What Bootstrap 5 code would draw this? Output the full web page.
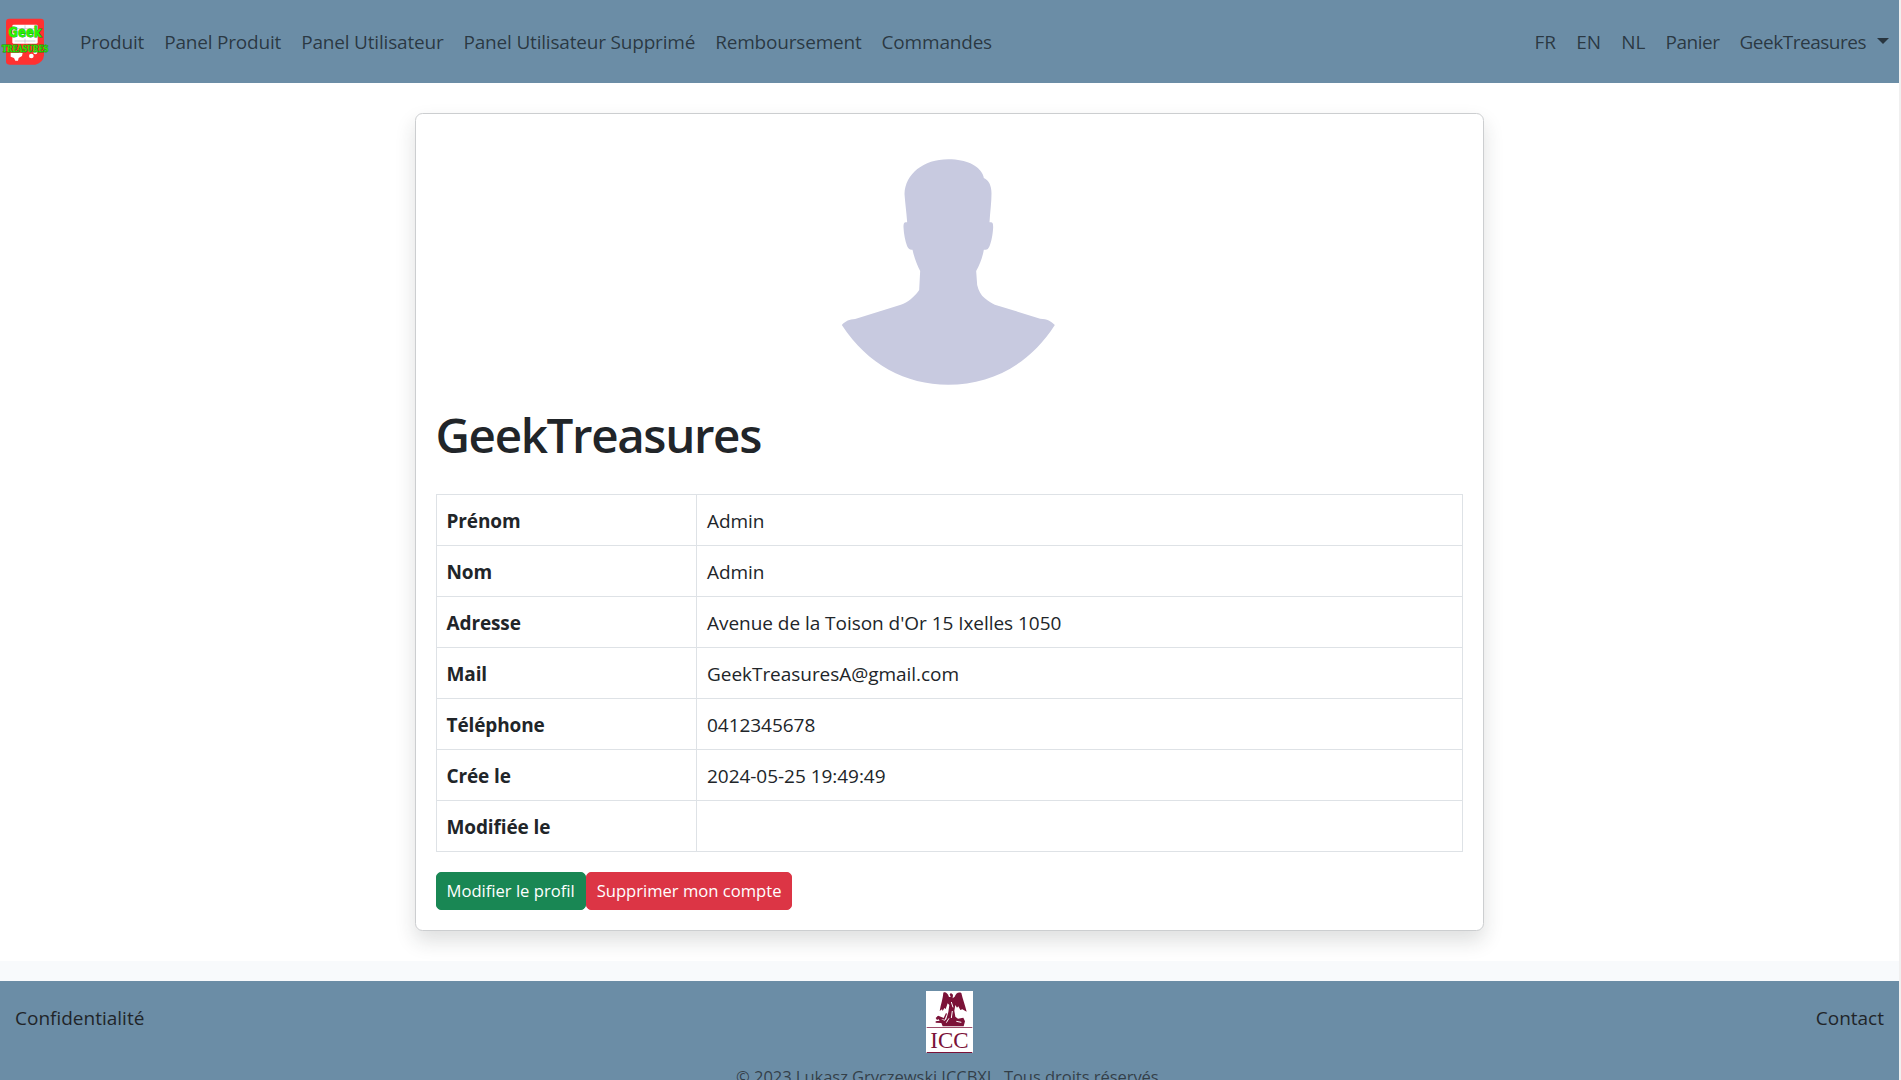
<!DOCTYPE html>
<html lang="fr">
<head>
<meta charset="utf-8">
<meta name="viewport" content="width=device-width, initial-scale=1">
<title>GeekTreasures</title>
<link href="https://cdn.jsdelivr.net/npm/bootstrap@5.3.0/dist/css/bootstrap.min.css" rel="stylesheet">
<style>
html { font-size: 20px; }
body { font-family: "Open Sans", "Noto Sans", sans-serif; font-size: 19px; line-height: 30px; background: #f0f0f0; overflow: hidden; }
.page { width: calc(100% - 2px); height: 100vh; overflow: hidden; background: #f8fafc; }
.bar { background: #6b8da6; }
.topbar { height: 83px; }
.topbar .nav-link { font-size: 19px; letter-spacing: -.19px; color: rgba(0,0,0,.62); padding-left: .5rem; padding-right: .5rem; }
.topbar .navbar-brand { line-height: 0; }
.topbar .lang { letter-spacing: .05px; }
.topbar .cart { letter-spacing: -.48px; }
.topbar .user { letter-spacing: -.48px; padding-right: 10px; }
.user::after { margin-left: 11px; vertical-align: 5px; border-top-width: 6px; border-left-width: 6px; border-right-width: 6px; }
.content-area { height: 878px; padding-top: 30px; }
.profile-wrap { width: 1650px; max-width: 100%; }
.profile-col { padding: 0 15px; }
.profile-card { border-radius: 7.5px; border-color: #ccced0; }
.profile-card .card-body { padding: 21px 20px 20px; }
.avatar { margin-bottom: 20px; }
.profile-name { font-size: 47.5px; line-height: 60px; font-weight: 600; letter-spacing: -1.35px; margin-bottom: 29px; }
.info { margin-bottom: 20px; }
.info th { width: 260.5px; }
.info th, .info td { height: 51px; padding: 11px 10px 9px; }
.info th { letter-spacing: -.12px; }
.info td { letter-spacing: -.04px; }
.btn-sm { font-size: 16.6px; line-height: 26.25px; padding: 5px 10px; border-radius: 5px; }
.foot { margin-top: 20px; padding: 10px 15px; }
.foot a { color: #212529; text-decoration: none; }
.foot .side { padding-top: 11.5px; }
.copyright { font-size: 16.6px; letter-spacing: -.08px; color: rgba(33,37,41,.75); margin-top: 9px; }
</style>
</head>
<body>
<div class="page">
  <nav class="navbar navbar-expand-md navbar-light bar topbar">
    <div class="container-fluid p-0">
      <a class="navbar-brand p-0 me-3" href="#">
        <svg width="50" height="50" viewBox="0 49 150 150">
          <path d="M28 54H122Q132 54 132 64V164Q130 186 106 192H28Q18 192 18 182V64Q18 54 28 54Z" fill="#ff3131"/>
          <rect x="37" y="72" width="76" height="57" rx="4" fill="#fff"/>
          <path d="M44 84H106M44 121H106M75 74V84M75 114V128" stroke="#bbb" stroke-width="2"/>
          <path d="M32 156H68L66 166L56 172L54 180H46L42 172L32 168Z" fill="#fff"/>
          <circle cx="94" cy="166" r="7" fill="#fff"/><circle cx="106" cy="155" r="6" fill="#fff"/>
          <text x="25" y="109" font-family="DejaVu Sans" font-weight="700" font-size="42" textLength="100" lengthAdjust="spacingAndGlyphs" fill="#27f500" stroke="#159500" stroke-width="2.5" paint-order="stroke">Geek</text>
          <text x="6" y="155" font-family="DejaVu Serif" font-weight="700" font-size="27" textLength="139" lengthAdjust="spacingAndGlyphs" fill="#27e800" stroke="#178c00" stroke-width="2.5" paint-order="stroke">TREASURES</text>
        </svg>
      </a>
      <ul class="navbar-nav me-auto">
        <li class="nav-item"><a class="nav-link" href="#">Produit</a></li>
        <li class="nav-item"><a class="nav-link" href="#">Panel Produit</a></li>
        <li class="nav-item"><a class="nav-link" href="#">Panel Utilisateur</a></li>
        <li class="nav-item"><a class="nav-link" href="#">Panel Utilisateur Supprimé</a></li>
        <li class="nav-item"><a class="nav-link" href="#">Remboursement</a></li>
        <li class="nav-item"><a class="nav-link" href="#">Commandes</a></li>
      </ul>
      <ul class="navbar-nav">
        <li class="nav-item"><a class="nav-link lang" href="#">FR</a></li>
        <li class="nav-item"><a class="nav-link lang" href="#">EN</a></li>
        <li class="nav-item"><a class="nav-link lang" href="#">NL</a></li>
        <li class="nav-item"><a class="nav-link cart" href="#">Panier</a></li>
        <li class="nav-item dropdown"><a class="nav-link dropdown-toggle user" href="#" data-bs-toggle="dropdown">GeekTreasures</a></li>
      </ul>
    </div>
  </nav>

  <main class="bg-white content-area">
    <div class="profile-wrap mx-auto">
      <div class="row justify-content-center g-0">
        <div class="col-8 profile-col">
          <div class="card shadow profile-card">
            <div class="card-body">
              <div class="text-center lh-1 avatar">
                <svg class="d-block mx-auto" width="300" height="250" viewBox="-1.5 13 900 750">
                  <path fill="#c8cae0" d="M446 86C505 86 532 106 545 123C550 130 552 136 553 142C568 148 576 165 576 188C576 215 572 245 570 275C579 274 581 277 581 290C580 312 575 335 570 347C566 356 562 359 553 357C549 380 541 402 530 421L533 463C537 480 544 493 556 503C566 511 577 519 586 522L722 564C743 565 755 571 766 583C690 702 575 762 446 762C318 762 205 702 127 583C138 571 150 566 167 565L304 522C325 515 344 499 357 481L359 478L362 421C352 402 344 380 339 357C330 358 327 354 323 347C317 330 313 312 312 290C312 277 314 274 323 275C321 245 317 218 315 190C317 130 372 86 446 86Z"/>
                </svg>
              </div>
              <h1 class="profile-name">GeekTreasures</h1>
              <table class="table table-bordered info">
                <tbody>
                  <tr><th>Prénom</th><td>Admin</td></tr>
                  <tr><th>Nom</th><td>Admin</td></tr>
                  <tr><th>Adresse</th><td>Avenue de la Toison d'Or 15 Ixelles 1050</td></tr>
                  <tr><th>Mail</th><td>GeekTreasuresA@gmail.com</td></tr>
                  <tr><th>Téléphone</th><td>0412345678</td></tr>
                  <tr><th>Crée le</th><td>2024-05-25 19:49:49</td></tr>
                  <tr><th>Modifiée le</th><td></td></tr>
                </tbody>
              </table>
              <div class="d-flex">
                <a class="btn btn-success btn-sm" href="#">Modifier le profil</a>
                <button class="btn btn-danger btn-sm" type="button">Supprimer mon compte</button>
              </div>
            </div>
          </div>
        </div>
      </div>
    </div>
  </main>

  <footer class="bar foot">
    <div class="row g-0">
      <div class="col side"><a href="#">Confidentialité</a></div>
      <div class="col-6 text-center">
        <svg class="d-block mx-auto" width="47" height="62" viewBox="78 62 141 186">
          <rect x="78" y="62" width="141" height="186" fill="#fff"/>
          <g fill="#7b1238">
            <path d="M147 80C143 68 136 64 130 67C129 84 122 103 119 122L126 117L128 122L133 113L137 116L143 99L148 104L145 125L139 146L134 151C126 150 121 144 114 137L111 140L119 151L107 153V157L124 158L128 168H191L195 153L190 142L174 145L166 139L163 121L166 104L171 112L175 108L181 119L187 117L200 124C195 103 188 86 184 68C175 64 168 69 164 79L158 84L159 73L153 68L149 72L152 80Z"/>
            <path d="M107 143L115 136L131 143L138 128L141 130L134 148L118 145L111 149ZM80 171H217V173H80ZM80 245H217V248H80Z"/>
          </g>
          <path d="M139 157L147 144M157 122L154 143M169 153L184 156M154 95L159 111" stroke="#fff" stroke-width="3" fill="none"/>
          <text x="91" y="232" font-family="Liberation Serif" font-size="69" textLength="115" lengthAdjust="spacingAndGlyphs" fill="#7b1238">ICC</text>
        </svg>
        <div class="copyright">© 2023 Lukasz Gryczewski ICCBXL. Tous droits réservés.</div>
      </div>
      <div class="col side text-end"><a href="#">Contact</a></div>
    </div>
  </footer>
</div>
<script src="https://cdn.jsdelivr.net/npm/bootstrap@5.3.0/dist/js/bootstrap.bundle.min.js"></script>
</body>
</html>
